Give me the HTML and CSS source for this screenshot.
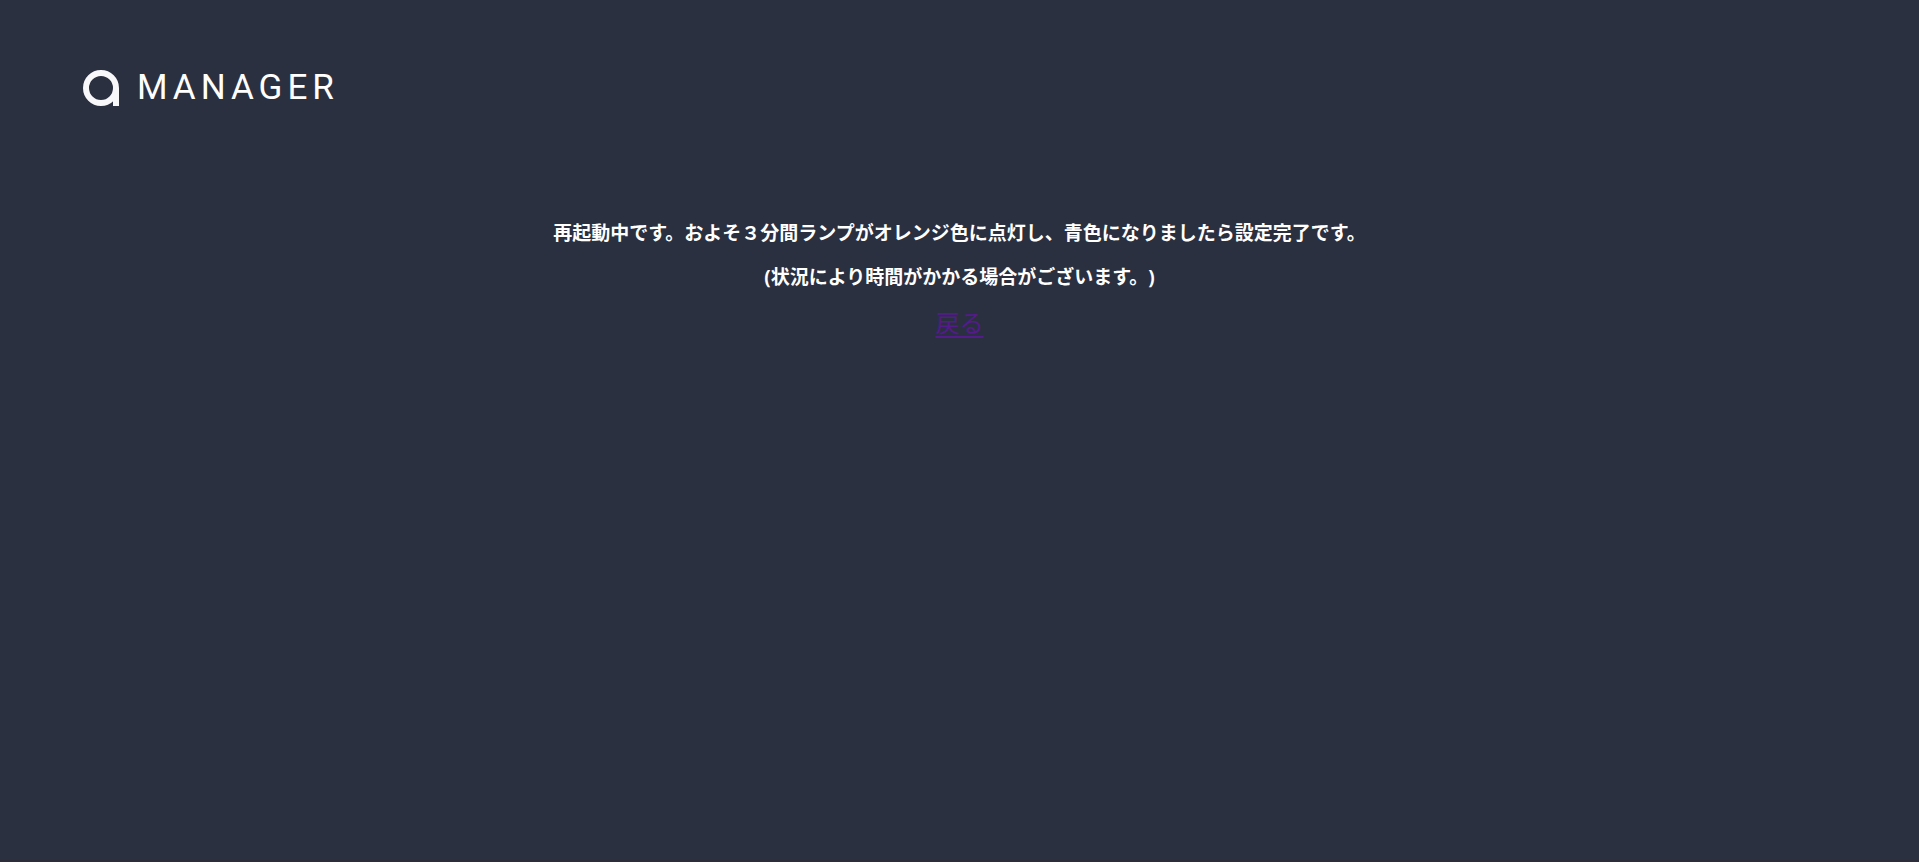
FILE: index.html
```
<!DOCTYPE html>
<html lang="ja">
<head>
<meta charset="utf-8">
<title>MANAGER</title>
<link rel="stylesheet" href="styles.css">
</head>

<body>

<div class="header">
	<svg class="logo_mark" viewBox="0 0 37 37" aria-hidden="true">
		<circle cx="18" cy="18" r="15" />
		<path d="M33 18V36" />
	</svg>
	<span class="logo_tx">MANAGER</span>
</div>

<div class="message">
	<p>再起動中です。およそ３分間ランプがオレンジ色に点灯し、青色になりましたら設定完了です。</p>
	<p>(状況により時間がかかる場合がございます。)</p>
	<a class="back" href="#">戻る</a>
</div>

</body>
</html>
```

FILE: styles.css
```
* {
	margin:0;
	padding:0;
	box-sizing:border-box;
}
body {
	min-height:100vh;
	background:#2A3040;
	border-bottom:2px solid #2D2D3A;
	color:#FFF;
	font-family:"Noto Sans", "Noto Sans CJK JP", sans-serif;
	text-spacing-trim:space-all;
}
.header {
	display:flex;
	align-items:center;
	padding:64px 83px;
}
.logo_mark {
	width:37px;
	height:37px;
	margin-right:17px;
	fill:none;
	stroke:#F8F8FB;
	stroke-width:6;
}
.logo_tx {
	font:35px/48px Roboto, sans-serif;
	letter-spacing:5px;
}
.message {
	padding-top:43px;
	text-align:center;
}
.message p {
	margin-bottom:16px;
	font-size:19px;
	font-weight:bold;
	line-height:28px;
}
.back {
	display:inline-block;
	font-size:24px;
	line-height:32px;
	color:#551A8B;
	text-decoration-thickness:2px;
	text-underline-offset:4px;
}
```
